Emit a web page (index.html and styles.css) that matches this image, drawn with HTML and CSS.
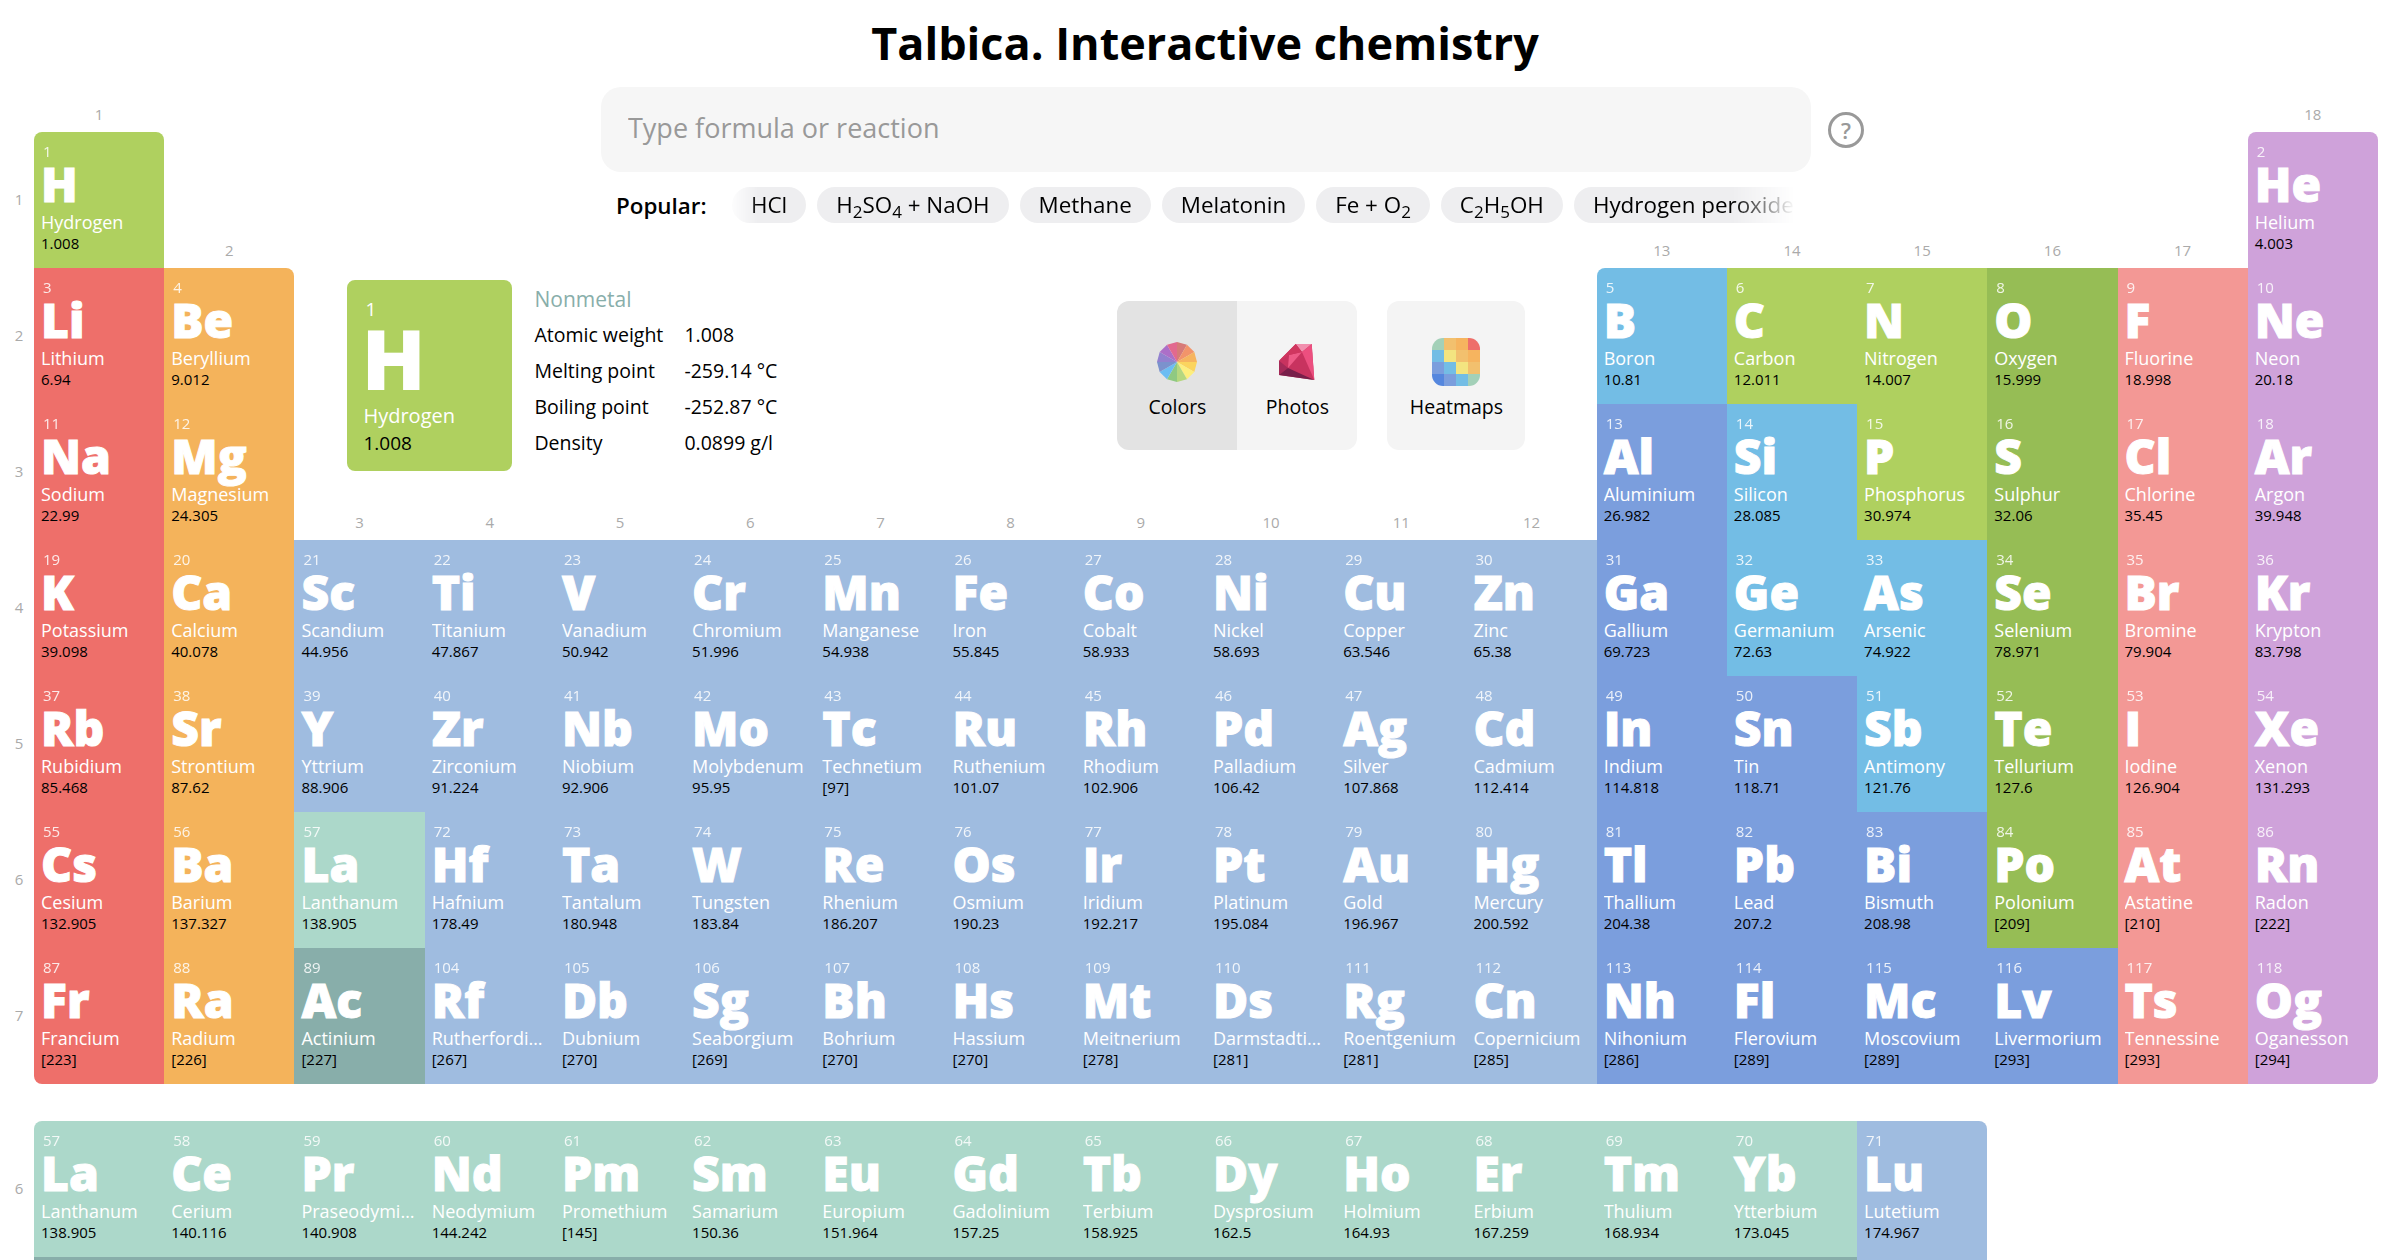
FILE: index.html
```html
<!DOCTYPE html>
<html lang="en">
<head>
    <meta charset="UTF-8">
    <title>Talbica. Interactive chemistry</title>
    <link rel="stylesheet" href="styles.css">
</head>
<body>
    <h1 class="title">Talbica. Interactive chemistry</h1>

    <div class="table">
        <div class="blank"></div>
        <div class="header">
            <div class="search">
                <input class="search-input" type="text" placeholder="Type formula or reaction">
                <span class="help">?</span>
            </div>
            <div class="popular">
                <span class="popular-label">Popular:</span>
                <div class="chips">
                    <span class="chip">HCl</span>
                    <span class="chip">H<sub>2</sub>SO<sub>4</sub> + NaOH</span>
                    <span class="chip">Methane</span>
                    <span class="chip">Melatonin</span>
                    <span class="chip">Fe + O<sub>2</sub></span>
                    <span class="chip">C<sub>2</sub>H<sub>5</sub>OH</span>
                    <span class="chip">Hydrogen peroxide</span>
                </div>
            </div>
        </div>
        <div class="blank"></div>

        <!-- period 1 -->
        <div class="el nm top-l top-r"><em class="period">1</em><em class="group">1</em><small>1</small><b>H</b><span>Hydrogen</span><i>1.008</i></div>
        <div class="el ng top-l top-r"><em class="group">18</em><small>2</small><b>He</b><span>Helium</span><i>4.003</i></div>

        <!-- period 2 -->
        <div class="el am"><em class="period">2</em><small>3</small><b>Li</b><span>Lithium</span><i>6.94</i></div>
        <div class="el ae top-r"><em class="group">2</em><small>4</small><b>Be</b><span>Beryllium</span><i>9.012</i></div>

        <div class="info">
            <div class="card">
                <small>1</small>
                <b>H</b>
                <span>Hydrogen</span>
                <i>1.008</i>
            </div>
            <div class="facts">
                <div class="facts-type">Nonmetal</div>
                <div class="fact"><span>Atomic weight</span><span>1.008</span></div>
                <div class="fact"><span>Melting point</span><span>-259.14 °C</span></div>
                <div class="fact"><span>Boiling point</span><span>-252.87 °C</span></div>
                <div class="fact"><span>Density</span><span>0.0899 g/l</span></div>
            </div>
            <div class="tabs">
                <div class="tab active">
                    <svg class="tab-icon" width="40" height="40" viewBox="0 0 40 40">
                        <polygon fill="#d77a78" points="20,20 20,0 30,2.68"/>
                        <polygon fill="#f2946a" points="20,20 30,2.68 37.32,10"/>
                        <polygon fill="#f6b45f" points="20,20 37.32,10 40,20"/>
                        <polygon fill="#fbd45e" points="20,20 40,20 37.32,30"/>
                        <polygon fill="#fdee7d" points="20,20 37.32,30 30,37.32"/>
                        <polygon fill="#b5d77f" points="20,20 30,37.32 20,40"/>
                        <polygon fill="#8fc982" points="20,20 20,40 10,37.32"/>
                        <polygon fill="#6cbdf2" points="20,20 10,37.32 2.68,30"/>
                        <polygon fill="#7b92cd" points="20,20 2.68,30 0,20"/>
                        <polygon fill="#9281cf" points="20,20 0,20 2.68,10"/>
                        <polygon fill="#ac6fc8" points="20,20 2.68,10 10,2.68"/>
                        <polygon fill="#e2698f" points="20,20 10,2.68 20,0"/>
                    </svg>
                    <span>Colors</span>
                </div>
                <div class="tab">
                    <svg class="tab-icon" width="40" height="40" viewBox="0 0 40 40">
                        <polygon fill="#c8335f" points="18.7,2 34.7,2 37.3,38 2,33 2,18.7"/>
                        <polygon fill="#f18fae" points="18.7,2 34.7,2 25,10"/>
                        <polygon fill="#ec4f7f" points="34.7,2 37.3,38 25,10"/>
                        <polygon fill="#ee5a86" points="12,13 25,10 11,26"/>
                        <polygon fill="#d0365f" points="18.7,2 25,10 12,13 2,18.7"/>
                        <polygon fill="#a42a58" points="2,18.7 11,26 2,33"/>
                        <polygon fill="#781f4a" points="11,26 37.3,38 2,33"/>
                    </svg>
                    <span>Photos</span>
                </div>
            </div>
            <div class="tab single">
                <svg class="tab-icon heat" width="48" height="48" viewBox="0 0 4 4">
                    <rect fill="#a3d0b8" x="0" y="0" width="1" height="1"/>
                    <rect fill="#f2c06e" x="1" y="0" width="1" height="1"/>
                    <rect fill="#f6b45f" x="2" y="0" width="1" height="1"/>
                    <rect fill="#ee6f6a" x="3" y="0" width="1" height="1"/>
                    <rect fill="#73bde5" x="0" y="1" width="1" height="1"/>
                    <rect fill="#f3e480" x="1" y="1" width="1" height="1"/>
                    <rect fill="#f2c06e" x="2" y="1" width="1" height="1"/>
                    <rect fill="#f6b45f" x="3" y="1" width="1" height="1"/>
                    <rect fill="#7b9edd" x="0" y="2" width="1" height="1"/>
                    <rect fill="#73bde5" x="1" y="2" width="1" height="1"/>
                    <rect fill="#f3e480" x="2" y="2" width="1" height="1"/>
                    <rect fill="#f2c06e" x="3" y="2" width="1" height="1"/>
                    <rect fill="#5587de" x="0" y="3" width="1" height="1"/>
                    <rect fill="#7b9edd" x="1" y="3" width="1" height="1"/>
                    <rect fill="#73bde5" x="2" y="3" width="1" height="1"/>
                    <rect fill="#a3d0b8" x="3" y="3" width="1" height="1"/>
                </svg>
                <span>Heatmaps</span>
            </div>
        </div>

        <div class="el ml top-l"><em class="group">13</em><small>5</small><b>B</b><span>Boron</span><i>10.81</i></div>
        <div class="el nm"><em class="group">14</em><small>6</small><b>C</b><span>Carbon</span><i>12.011</i></div>
        <div class="el nm"><em class="group">15</em><small>7</small><b>N</b><span>Nitrogen</span><i>14.007</i></div>
        <div class="el ch"><em class="group">16</em><small>8</small><b>O</b><span>Oxygen</span><i>15.999</i></div>
        <div class="el hl"><em class="group">17</em><small>9</small><b>F</b><span>Fluorine</span><i>18.998</i></div>
        <div class="el ng"><small>10</small><b>Ne</b><span>Neon</span><i>20.18</i></div>

        <!-- period 3 -->
        <div class="el am"><em class="period">3</em><small>11</small><b>Na</b><span>Sodium</span><i>22.99</i></div>
        <div class="el ae"><small>12</small><b>Mg</b><span>Magnesium</span><i>24.305</i></div>
        <div class="el pt"><small>13</small><b>Al</b><span>Aluminium</span><i>26.982</i></div>
        <div class="el ml"><small>14</small><b>Si</b><span>Silicon</span><i>28.085</i></div>
        <div class="el nm"><small>15</small><b>P</b><span>Phosphorus</span><i>30.974</i></div>
        <div class="el ch"><small>16</small><b>S</b><span>Sulphur</span><i>32.06</i></div>
        <div class="el hl"><small>17</small><b>Cl</b><span>Chlorine</span><i>35.45</i></div>
        <div class="el ng"><small>18</small><b>Ar</b><span>Argon</span><i>39.948</i></div>

        <!-- period 4 -->
        <div class="el am"><em class="period">4</em><small>19</small><b>K</b><span>Potassium</span><i>39.098</i></div>
        <div class="el ae"><small>20</small><b>Ca</b><span>Calcium</span><i>40.078</i></div>
        <div class="el tm"><em class="group">3</em><small>21</small><b>Sc</b><span>Scandium</span><i>44.956</i></div>
        <div class="el tm"><em class="group">4</em><small>22</small><b>Ti</b><span>Titanium</span><i>47.867</i></div>
        <div class="el tm"><em class="group">5</em><small>23</small><b>V</b><span>Vanadium</span><i>50.942</i></div>
        <div class="el tm"><em class="group">6</em><small>24</small><b>Cr</b><span>Chromium</span><i>51.996</i></div>
        <div class="el tm"><em class="group">7</em><small>25</small><b>Mn</b><span>Manganese</span><i>54.938</i></div>
        <div class="el tm"><em class="group">8</em><small>26</small><b>Fe</b><span>Iron</span><i>55.845</i></div>
        <div class="el tm"><em class="group">9</em><small>27</small><b>Co</b><span>Cobalt</span><i>58.933</i></div>
        <div class="el tm"><em class="group">10</em><small>28</small><b>Ni</b><span>Nickel</span><i>58.693</i></div>
        <div class="el tm"><em class="group">11</em><small>29</small><b>Cu</b><span>Copper</span><i>63.546</i></div>
        <div class="el tm"><em class="group">12</em><small>30</small><b>Zn</b><span>Zinc</span><i>65.38</i></div>
        <div class="el pt"><small>31</small><b>Ga</b><span>Gallium</span><i>69.723</i></div>
        <div class="el ml"><small>32</small><b>Ge</b><span>Germanium</span><i>72.63</i></div>
        <div class="el ml"><small>33</small><b>As</b><span>Arsenic</span><i>74.922</i></div>
        <div class="el ch"><small>34</small><b>Se</b><span>Selenium</span><i>78.971</i></div>
        <div class="el hl"><small>35</small><b>Br</b><span>Bromine</span><i>79.904</i></div>
        <div class="el ng"><small>36</small><b>Kr</b><span>Krypton</span><i>83.798</i></div>

        <!-- period 5 -->
        <div class="el am"><em class="period">5</em><small>37</small><b>Rb</b><span>Rubidium</span><i>85.468</i></div>
        <div class="el ae"><small>38</small><b>Sr</b><span>Strontium</span><i>87.62</i></div>
        <div class="el tm"><small>39</small><b>Y</b><span>Yttrium</span><i>88.906</i></div>
        <div class="el tm"><small>40</small><b>Zr</b><span>Zirconium</span><i>91.224</i></div>
        <div class="el tm"><small>41</small><b>Nb</b><span>Niobium</span><i>92.906</i></div>
        <div class="el tm"><small>42</small><b>Mo</b><span>Molybdenum</span><i>95.95</i></div>
        <div class="el tm"><small>43</small><b>Tc</b><span>Technetium</span><i>[97]</i></div>
        <div class="el tm"><small>44</small><b>Ru</b><span>Ruthenium</span><i>101.07</i></div>
        <div class="el tm"><small>45</small><b>Rh</b><span>Rhodium</span><i>102.906</i></div>
        <div class="el tm"><small>46</small><b>Pd</b><span>Palladium</span><i>106.42</i></div>
        <div class="el tm"><small>47</small><b>Ag</b><span>Silver</span><i>107.868</i></div>
        <div class="el tm"><small>48</small><b>Cd</b><span>Cadmium</span><i>112.414</i></div>
        <div class="el pt"><small>49</small><b>In</b><span>Indium</span><i>114.818</i></div>
        <div class="el pt"><small>50</small><b>Sn</b><span>Tin</span><i>118.71</i></div>
        <div class="el ml"><small>51</small><b>Sb</b><span>Antimony</span><i>121.76</i></div>
        <div class="el ch"><small>52</small><b>Te</b><span>Tellurium</span><i>127.6</i></div>
        <div class="el hl"><small>53</small><b>I</b><span>Iodine</span><i>126.904</i></div>
        <div class="el ng"><small>54</small><b>Xe</b><span>Xenon</span><i>131.293</i></div>

        <!-- period 6 -->
        <div class="el am"><em class="period">6</em><small>55</small><b>Cs</b><span>Cesium</span><i>132.905</i></div>
        <div class="el ae"><small>56</small><b>Ba</b><span>Barium</span><i>137.327</i></div>
        <div class="el ln"><small>57</small><b>La</b><span>Lanthanum</span><i>138.905</i></div>
        <div class="el tm"><small>72</small><b>Hf</b><span>Hafnium</span><i>178.49</i></div>
        <div class="el tm"><small>73</small><b>Ta</b><span>Tantalum</span><i>180.948</i></div>
        <div class="el tm"><small>74</small><b>W</b><span>Tungsten</span><i>183.84</i></div>
        <div class="el tm"><small>75</small><b>Re</b><span>Rhenium</span><i>186.207</i></div>
        <div class="el tm"><small>76</small><b>Os</b><span>Osmium</span><i>190.23</i></div>
        <div class="el tm"><small>77</small><b>Ir</b><span>Iridium</span><i>192.217</i></div>
        <div class="el tm"><small>78</small><b>Pt</b><span>Platinum</span><i>195.084</i></div>
        <div class="el tm"><small>79</small><b>Au</b><span>Gold</span><i>196.967</i></div>
        <div class="el tm"><small>80</small><b>Hg</b><span>Mercury</span><i>200.592</i></div>
        <div class="el pt"><small>81</small><b>Tl</b><span>Thallium</span><i>204.38</i></div>
        <div class="el pt"><small>82</small><b>Pb</b><span>Lead</span><i>207.2</i></div>
        <div class="el pt"><small>83</small><b>Bi</b><span>Bismuth</span><i>208.98</i></div>
        <div class="el ch"><small>84</small><b>Po</b><span>Polonium</span><i>[209]</i></div>
        <div class="el hl"><small>85</small><b>At</b><span>Astatine</span><i>[210]</i></div>
        <div class="el ng"><small>86</small><b>Rn</b><span>Radon</span><i>[222]</i></div>

        <!-- period 7 -->
        <div class="el am bot-l"><em class="period">7</em><small>87</small><b>Fr</b><span>Francium</span><i>[223]</i></div>
        <div class="el ae"><small>88</small><b>Ra</b><span>Radium</span><i>[226]</i></div>
        <div class="el ac"><small>89</small><b>Ac</b><span>Actinium</span><i>[227]</i></div>
        <div class="el tm"><small>104</small><b>Rf</b><span>Rutherfordium</span><i>[267]</i></div>
        <div class="el tm"><small>105</small><b>Db</b><span>Dubnium</span><i>[270]</i></div>
        <div class="el tm"><small>106</small><b>Sg</b><span>Seaborgium</span><i>[269]</i></div>
        <div class="el tm"><small>107</small><b>Bh</b><span>Bohrium</span><i>[270]</i></div>
        <div class="el tm"><small>108</small><b>Hs</b><span>Hassium</span><i>[270]</i></div>
        <div class="el tm"><small>109</small><b>Mt</b><span>Meitnerium</span><i>[278]</i></div>
        <div class="el tm"><small>110</small><b>Ds</b><span>Darmstadtium</span><i>[281]</i></div>
        <div class="el tm"><small>111</small><b>Rg</b><span>Roentgenium</span><i>[281]</i></div>
        <div class="el tm"><small>112</small><b>Cn</b><span>Copernicium</span><i>[285]</i></div>
        <div class="el pt"><small>113</small><b>Nh</b><span>Nihonium</span><i>[286]</i></div>
        <div class="el pt"><small>114</small><b>Fl</b><span>Flerovium</span><i>[289]</i></div>
        <div class="el pt"><small>115</small><b>Mc</b><span>Moscovium</span><i>[289]</i></div>
        <div class="el pt"><small>116</small><b>Lv</b><span>Livermorium</span><i>[293]</i></div>
        <div class="el hl"><small>117</small><b>Ts</b><span>Tennessine</span><i>[293]</i></div>
        <div class="el ng bot-r"><small>118</small><b>Og</b><span>Oganesson</span><i>[294]</i></div>
    </div>

    <div class="table series">
        <div class="el ln top-l"><em class="period">6</em><small>57</small><b>La</b><span>Lanthanum</span><i>138.905</i></div>
        <div class="el ln"><small>58</small><b>Ce</b><span>Cerium</span><i>140.116</i></div>
        <div class="el ln"><small>59</small><b>Pr</b><span>Praseodymium</span><i>140.908</i></div>
        <div class="el ln"><small>60</small><b>Nd</b><span>Neodymium</span><i>144.242</i></div>
        <div class="el ln"><small>61</small><b>Pm</b><span>Promethium</span><i>[145]</i></div>
        <div class="el ln"><small>62</small><b>Sm</b><span>Samarium</span><i>150.36</i></div>
        <div class="el ln"><small>63</small><b>Eu</b><span>Europium</span><i>151.964</i></div>
        <div class="el ln"><small>64</small><b>Gd</b><span>Gadolinium</span><i>157.25</i></div>
        <div class="el ln"><small>65</small><b>Tb</b><span>Terbium</span><i>158.925</i></div>
        <div class="el ln"><small>66</small><b>Dy</b><span>Dysprosium</span><i>162.5</i></div>
        <div class="el ln"><small>67</small><b>Ho</b><span>Holmium</span><i>164.93</i></div>
        <div class="el ln"><small>68</small><b>Er</b><span>Erbium</span><i>167.259</i></div>
        <div class="el ln"><small>69</small><b>Tm</b><span>Thulium</span><i>168.934</i></div>
        <div class="el ln"><small>70</small><b>Yb</b><span>Ytterbium</span><i>173.045</i></div>
        <div class="el tm top-r"><small>71</small><b>Lu</b><span>Lutetium</span><i>174.967</i></div>
        <div class="row-end"></div>

        <div class="ac actinides"></div>
        <div class="tm"></div>
    </div>
</body>
</html>
```

FILE: styles.css
```css
body {
    margin: 0;
    font-family: "Open Sans", sans-serif;
    background-color: white;
    color: black;
}
.title {
    margin: 0;
    height: 87px;
    padding-left: 10px;
    line-height: 86px;
    font-size: 45px;
    font-weight: 700;
    text-align: center;
}

/* main grid */
.table {
    display: grid;
    grid-template-columns: repeat(18, 130.22px);
    grid-template-rows: 45px repeat(7, 136px);
    padding-left: 34px;
}
.table.series {
    grid-template-rows: 136px 3px;
    margin-top: 37px;
}
.row-end {
    grid-column: span 3;
}
.actinides {
    grid-column: span 14;
}
.header {
    grid-column: span 16;
    grid-row: span 2;
    display: flex;
    flex-direction: column;
    align-items: center;
}
.search {
    position: relative;
    width: 1210px;
    height: 85px;
}
.search-input {
    box-sizing: border-box;
    width: 100%;
    height: 100%;
    padding: 0 27px 4px;
    border: none;
    border-radius: 20px;
    background-color: #f6f6f6;
    font-family: inherit;
    font-size: 27px;
}
.search-input::placeholder {
    color: #999;
    opacity: 1;
}
.help {
    position: absolute;
    top: 25px;
    right: -53px;
    box-sizing: border-box;
    width: 36px;
    height: 36px;
    border: 3px solid #999;
    border-radius: 50%;
    color: #999;
    font-size: 22px;
    font-weight: 600;
    line-height: 30px;
    text-align: center;
}
.popular {
    display: flex;
    align-items: center;
    width: 1210px;
    margin-top: 15px;
    padding-left: 15px;
    box-sizing: border-box;
    font-size: 22.4px;
}
.popular-label {
    width: 116px;
    font-weight: 600;
}
.chips {
    display: flex;
    gap: 11px;
    width: 1063px;
    overflow: hidden;
    white-space: nowrap;
    -webkit-mask-image: linear-gradient(to right, rgba(0, 0, 0, .15) 0, black 26px, black 1000px, transparent 100%);
    mask-image: linear-gradient(to right, rgba(0, 0, 0, .15) 0, black 26px, black 1000px, transparent 100%);
}
.chip {
    height: 36px;
    padding: 0 19px;
    border-radius: 18px;
    background-color: #eeeef0;
    line-height: 36px;
}
.chip sub {
    font-size: 17px;
    line-height: 0;
}

/* element cell */
.el {
    position: relative;
    box-sizing: border-box;
    padding: 9px 7px 0;
    color: white;
    min-width: 0;
}
.el small {
    display: block;
    padding-left: 2px;
    margin-bottom: 1px;
    font-size: 15px;
    line-height: 20px;
    opacity: .85;
}
.el b {
    display: block;
    font-size: 48px;
    font-weight: 800;
    line-height: 44px;
    -webkit-text-stroke: 1px white;
}
.el span {
    display: block;
    margin-top: 5px;
    font-size: 18px;
    line-height: 22px;
    white-space: nowrap;
    overflow: hidden;
    text-overflow: ellipsis;
}
.el i {
    display: block;
    font-size: 15px;
    font-style: normal;
    line-height: 20px;
    color: black;
}
.group, .period {
    position: absolute;
    color: #aaa;
    font-size: 15px;
    font-style: normal;
}
.group {
    top: -29px;
    left: 0;
    right: 0;
    line-height: 22px;
    text-align: center;
}
.period {
    top: 0;
    left: -25px;
    width: 20px;
    line-height: 134px;
    text-align: center;
}
.top-l { border-top-left-radius: 8px; }
.top-r { border-top-right-radius: 8px; }
.bot-l { border-bottom-left-radius: 8px; }
.bot-r { border-bottom-right-radius: 8px; }

/* categories */
.am { background-color: #ee6f6a; }
.ae { background-color: #f4b35b; }
.tm { background-color: #9fbce0; }
.pt { background-color: #7b9edd; }
.ml { background-color: #73bde5; }
.nm { background-color: #afd05f; }
.ch { background-color: #96bd55; }
.hl { background-color: #f39895; }
.ng { background-color: #cfa2da; }
.ln { background-color: #acd8ca; }
.ac { background-color: #88aeaa; }

/* selected element panel */
.info {
    grid-column: span 10;
    grid-row: span 2;
    display: flex;
    align-items: flex-start;
    padding-left: 53px;
}
.card {
    box-sizing: border-box;
    flex: none;
    width: 165px;
    height: 191px;
    margin-top: 12px;
    padding: 17px 15px 0;
    border-radius: 8px;
    background-color: #afd05f;
    color: white;
}
.card small {
    display: block;
    padding-left: 3px;
    margin-bottom: 1px;
    font-size: 19px;
    line-height: 24px;
}
.card b {
    display: block;
    margin-left: -1px;
    font-size: 84px;
    font-weight: 800;
    line-height: 72px;
}
.card span {
    display: block;
    margin-top: 9px;
    margin-left: 1px;
    font-size: 20px;
    line-height: 26px;
}
.card i {
    display: block;
    margin-top: 1px;
    margin-left: 1px;
    color: black;
    font-size: 19px;
    font-style: normal;
    line-height: 26px;
}
.facts {
    flex: none;
    width: 583px;
    margin-left: 22px;
    margin-top: 17px;
    font-size: 19.5px;
}
.facts-type {
    margin-bottom: 4px;
    color: #88aeaa;
    font-size: 21px;
    line-height: 28px;
}
.fact {
    display: grid;
    grid-template-columns: 150px auto;
    line-height: 36px;
}
.tabs {
    display: flex;
    flex: none;
    margin-top: 33px;
    border-radius: 12px;
    overflow: hidden;
}
.tab {
    display: flex;
    flex-direction: column;
    align-items: center;
    width: 120px;
    height: 149px;
    background-color: #f4f4f4;
    font-size: 19.5px;
}
.tab.active {
    background-color: #e3e3e3;
}
.tab.single {
    width: 138px;
    margin-top: 33px;
    margin-left: 30px;
    border-radius: 12px;
}
.tab-icon {
    margin-top: 41px;
    margin-bottom: 11px;
    height: 40px;
}
.tab span {
    line-height: 28px;
}
.heat {
    height: 48px;
    margin-top: 37px;
    margin-bottom: 7px;
    border-radius: 11px;
}
```
